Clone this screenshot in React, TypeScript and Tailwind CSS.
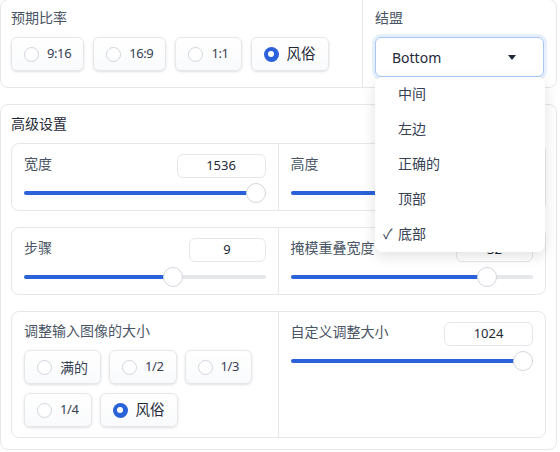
import React from 'react';

const font = { fontFamily: '"Noto Sans", "Noto Sans CJK SC", sans-serif' };

function Radio({ label, checked = false }: { label: string; checked?: boolean }) {
  const latin = /^[0-9:/]+$/.test(label);
  return (
    <label className="flex h-[34px] items-center gap-2 rounded-md border border-gray-200 bg-gradient-to-b from-white to-gray-50 px-3 text-gray-700 shadow-sm">
      {checked ? (
        <span className="flex size-[15px] items-center justify-center rounded-full bg-[#2b62d9]">
          <span className="size-[6px] rounded-full bg-white" />
        </span>
      ) : (
        <span className="size-[15px] rounded-full border border-gray-300 bg-white" />
      )}
      <span
        className={
          latin ? 'text-[13px] tracking-[-0.4px]' : checked ? 'text-[14.5px] text-gray-800' : 'text-[14px]'
        }
      >
        {label}
      </span>
    </label>
  );
}

function Slider({ pct }: { pct: number }) {
  return (
    <div className="relative h-5">
      <div className="absolute inset-x-0 top-[8px] h-1 rounded-full bg-gray-200" />
      <div
        className="absolute left-0 top-[8px] h-1 rounded-full bg-[#2b62d9]"
        style={{ width: `calc(${pct} * (100% - 20px) + 10px)` }}
      />
      <div
        className="absolute top-0 size-5 rounded-full border border-gray-300 bg-white"
        style={{ left: `calc(${pct} * (100% - 20px))` }}
      />
    </div>
  );
}

function NumberField({ label, value, pct, inputW }: { label: string; value: string; pct: number; inputW: string }) {
  return (
    <div className="flex flex-col gap-[5px] px-3 pb-[7px] pt-[10px]">
      <div className="flex items-start justify-between">
        <span className="text-[14px] leading-5 text-gray-600">{label}</span>
        <div
          className={`flex h-6 items-center justify-center rounded-md border border-gray-200 bg-white text-[13px] text-gray-800 ${inputW}`}
        >
          {value}
        </div>
      </div>
      <Slider pct={pct} />
    </div>
  );
}

export default function App() {
  return (
    <div className="w-[557px] bg-white" style={font}>
      {/* top row */}
      <div className="-mt-px flex h-[89px] rounded-lg border border-gray-200">
        <div className="w-[362px] border-r border-gray-200 px-[10px] pt-[8px]">
          <div className="text-[14px] leading-5 text-gray-600">预期比率</div>
          <div className="mt-[9px] flex gap-[9px]">
            <Radio label="9:16" />
            <Radio label="16:9" />
            <Radio label="1:1" />
            <Radio label="风俗" checked />
          </div>
        </div>
        <div className="flex-1 px-3 pt-[8px]">
          <div className="text-[14px] leading-5 text-gray-600">结盟</div>
          <div className="relative mt-[9px]">
            <div className="flex h-[40px] items-center justify-between rounded-md border border-[#a9c8f5] bg-white pl-4 pr-[27px] text-[14px] text-gray-800 shadow-[0_0_0_3px_#e6effc]">
              <span>Bottom</span>
              <span className="h-0 w-0 border-x-[4px] border-t-[5px] border-x-transparent border-t-gray-800" />
            </div>
            <ul className="absolute left-0 top-full z-10 w-[170px] rounded-lg bg-white text-[14px] text-gray-700 shadow-[0_4px_14px_rgba(0,0,0,0.12)]">
              {['中间', '左边', '正确的', '顶部', '底部'].map((t, i) => (
                <li key={t} className="relative flex h-[35px] items-center pb-[3px] pl-[23px]">
                  {i === 4 && <span className="absolute left-[8px] text-gray-700">✓</span>}
                  {t}
                </li>
              ))}
            </ul>
          </div>
        </div>
      </div>

      {/* advanced settings */}
      <div className="mt-[16px] rounded-lg border border-gray-200 px-[10px] pb-[11px] pt-[9px]">
        <div className="text-[14px] leading-5 text-gray-800">高级设置</div>
        <div className="mt-[9px] flex flex-col gap-[16px]">
          <div className="grid grid-cols-2 rounded-lg border border-gray-200">
            <div className="border-r border-gray-200">
              <NumberField label="宽度" value="1536" pct={1} inputW="w-[89px]" />
            </div>
            <NumberField label="高度" value="1024" pct={0.38} inputW="w-[89px]" />
          </div>
          <div className="grid grid-cols-2 rounded-lg border border-gray-200">
            <div className="border-r border-gray-200">
              <NumberField label="步骤" value="9" pct={0.627} inputW="w-[77px]" />
            </div>
            <NumberField label="掩模重叠宽度" value="32" pct={0.837} inputW="w-[77px]" />
          </div>
          <div className="grid grid-cols-2 rounded-lg border border-gray-200">
            <div className="border-r border-gray-200 px-3 pb-[10px] pt-[9px]">
              <div className="text-[14px] leading-5 text-gray-600">调整输入图像的大小</div>
              <div className="mt-[9px] flex flex-wrap gap-x-2 gap-y-[9px]">
                <Radio label="满的" />
                <Radio label="1/2" />
                <Radio label="1/3" />
                <Radio label="1/4" />
                <Radio label="风俗" checked />
              </div>
            </div>
            <NumberField label="自定义调整大小" value="1024" pct={1} inputW="w-[89px]" />
          </div>
        </div>
      </div>
    </div>
  );
}
